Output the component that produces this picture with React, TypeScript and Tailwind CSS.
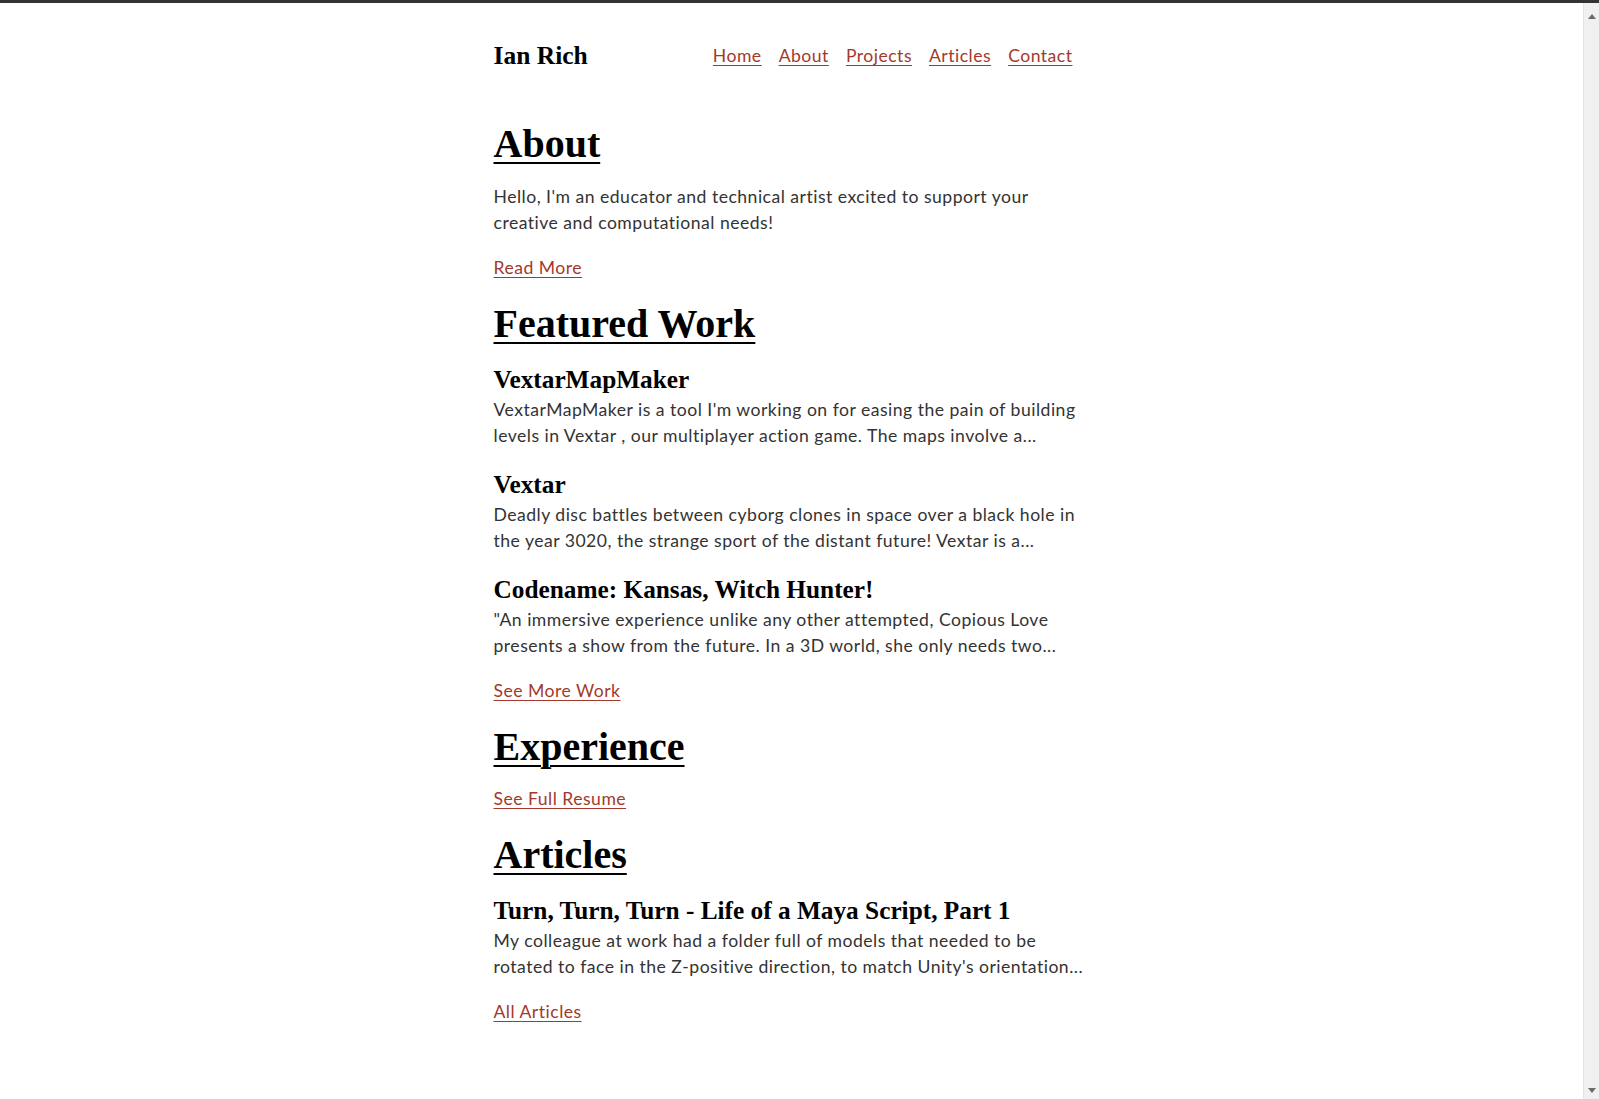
import React from "react";

const serif = "font-['Liberation_Serif','Times_New_Roman',serif]";
const sans = "font-['Lato','Noto_Sans',sans-serif]";

function H2({ children, className = "" }: { children: React.ReactNode; className?: string }) {
  return (
    <h2 className={`${serif} text-[40px] font-bold leading-[50px] text-black ${className}`}>
      <a href="#" className="underline decoration-2 underline-offset-[5px]">{children}</a>
    </h2>
  );
}

function H3({ children, className = "" }: { children: React.ReactNode; className?: string }) {
  return (
    <h3 className={`${serif} text-[25.3px] font-bold leading-[32px] text-black ${className}`}>{children}</h3>
  );
}

function Para({ children, className = "" }: { children: React.ReactNode; className?: string }) {
  return <p className={`text-[17.6px] tracking-[0.48px] leading-[26px] text-[#333] ${className}`}>{children}</p>;
}

function LinkP({ children, className = "" }: { children: React.ReactNode; className?: string }) {
  return (
    <p className={`text-[17.6px] tracking-[0.48px] leading-[26px] ${className}`}>
      <a href="#" className="text-[#a3392b] underline underline-offset-[3px]">{children}</a>
    </p>
  );
}

export default function App() {
  return (
    <div className={`h-[1099px] overflow-hidden flex flex-col bg-white ${sans}`}>
      <div className="h-[3px] bg-[#333333] shrink-0" />
      <div className="flex flex-1 min-h-0">
        <main className="flex-1 min-w-0">
          <div className="w-[596px] mx-auto">
            <header className="pt-[37px] h-[69px] flex items-center justify-between">
              <div className={`${serif} text-[25.5px] font-bold leading-[32px] text-black`}>Ian Rich</div>
              <nav className="flex gap-[17px] mr-[17px] text-[17.6px] tracking-[0.48px] leading-[26px]">
                {["Home", "About", "Projects", "Articles", "Contact"].map((l) => (
                  <a key={l} href="#" className="text-[#a3392b] underline underline-offset-[3px]">
                    {l}
                  </a>
                ))}
              </nav>
            </header>

            <H2 className="mt-[47px]">About</H2>
            <Para className="mt-[15px]">
              Hello, I'm an educator and technical artist excited to support your creative and computational needs!
            </Para>
            <LinkP className="mt-[19px]">Read More</LinkP>

            <H2 className="mt-[18px]">Featured Work</H2>
            <H3 className="mt-[14px]">VextarMapMaker</H3>
            <Para className="mt-[2px]">
              VextarMapMaker is a tool I'm working on for easing the pain of building levels in Vextar , our multiplayer action game. The maps involve a...
            </Para>
            <H3 className="mt-[19px]">Vextar</H3>
            <Para className="mt-[2px]">
              Deadly disc battles between cyborg clones in space over a black hole in the year 3020, the strange sport of the distant future! Vextar is a...
            </Para>
            <H3 className="mt-[19px]">Codename: Kansas, Witch Hunter!</H3>
            <Para className="mt-[2px]">
              "An immersive experience unlike any other attempted, Copious Love presents a show from the future. In a 3D world, she only needs two...
            </Para>
            <LinkP className="mt-[19px]">See More Work</LinkP>

            <H2 className="mt-[18px]">Experience</H2>
            <LinkP className="mt-[14px]">See Full Resume</LinkP>

            <H2 className="mt-[18px]">Articles</H2>
            <H3 className="mt-[14px]">Turn, Turn, Turn - Life of a Maya Script, Part 1</H3>
            <Para className="mt-[2px]">
              My colleague at work had a folder full of models that needed to be rotated to face in the Z-positive direction, to match Unity's orientation...
            </Para>
            <LinkP className="mt-[19px]">All Articles</LinkP>
          </div>
        </main>
        <div className="w-[16px] shrink-0 bg-[#f0f0f0] border-l border-[#e4e4e4] flex flex-col justify-between items-center pt-[11px] pb-[6px]">
          <svg width="8" height="5" viewBox="0 0 8 5">
            <path d="M4 0 L8 5 L0 5 Z" fill="#6b6b6b" />
          </svg>
          <svg width="8" height="5" viewBox="0 0 8 5">
            <path d="M0 0 L8 0 L4 5 Z" fill="#6b6b6b" />
          </svg>
        </div>
      </div>
    </div>
  );
}
